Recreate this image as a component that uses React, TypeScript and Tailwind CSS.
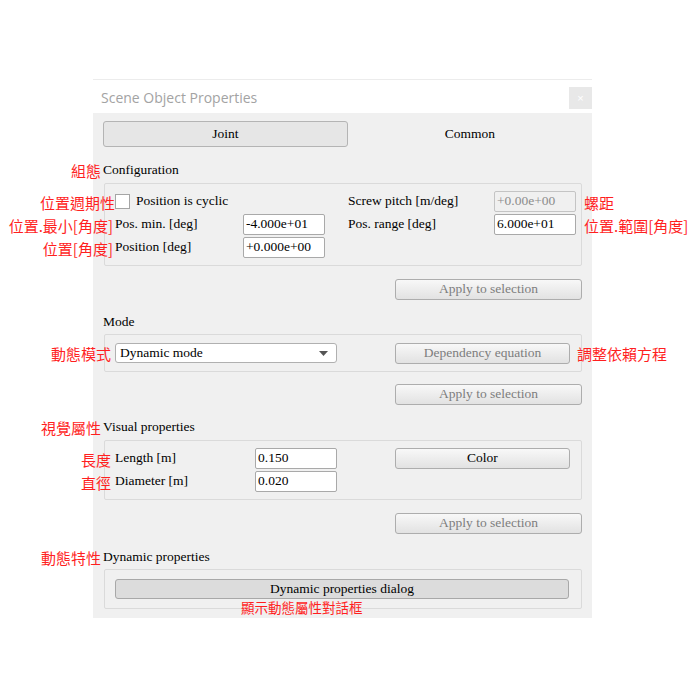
import React from "react";

const RED = "text-[#ff1f1f] font-[family-name:'Noto_Sans_CJK_TC','Noto_Sans_CJK_SC',sans-serif]";

function AnnL({ text, gap = "mr-[2px]" }: { text: string; gap?: string }) {
  return (
    <span
      className={`absolute right-full top-1/2 -translate-y-1/2 whitespace-nowrap text-[15px] leading-none ${gap} ${RED}`}
    >
      {text}
    </span>
  );
}

function AnnR({ text, gap = "ml-[9px]" }: { text: string; gap?: string }) {
  return (
    <span
      className={`absolute left-full top-1/2 -translate-y-1/2 whitespace-nowrap text-[15px] leading-none ${gap} ${RED}`}
    >
      {text}
    </span>
  );
}

function Input({ value, disabled = false, ann }: { value: string; disabled?: boolean; ann?: string }) {
  return (
    <div
      className={`relative h-[21px] w-[82px] rounded-[2px] border flex items-center pl-[2px] text-[13.5px] ${
        disabled ? "bg-[#f0f0f0] border-[#c4c4c4] text-[#8c8c8c]" : "bg-white border-[#a9a9a9] text-black"
      }`}
    >
      {value}
      {ann && <AnnR text={ann} />}
    </div>
  );
}

function Btn({ children, className = "", disabled = false }: { children: React.ReactNode; className?: string; disabled?: boolean }) {
  return (
    <div
      className={`h-[21px] rounded-[3px] border border-[#adadad] bg-linear-to-b from-[#f8f8f8] to-[#e2e2e2] flex items-center justify-center text-[13.5px] ${
        disabled ? "text-[#7d7d7d]" : "text-black"
      } ${className}`}
    >
      {children}
    </div>
  );
}

function Label({ text, ann }: { text: string; ann: string }) {
  return (
    <div className="h-[16px] flex items-center">
      <span className="relative leading-none">
        {text}
        <AnnL text={ann} />
      </span>
    </div>
  );
}

export default function App() {
  return (
    <div className="w-[700px] h-[700px] bg-white overflow-hidden font-[family-name:'Liberation_Serif',serif] text-[13.5px] text-black">
      <div className="ml-[93px] mt-[79px] w-[499px] border-t border-[#ececec]">
        {/* Title bar */}
        <div className="h-[33px] bg-white flex items-start justify-between">
          <div className="pl-[8px] pt-[7px] text-[14px] text-[#a3a3a3] font-[family-name:'Open_Sans',sans-serif]">
            Scene Object Properties
          </div>
          <div className="mt-[7px] w-[23px] h-[22px] bg-[#e8e8e8] flex items-center justify-center text-[11px] text-white font-[family-name:'Liberation_Sans',sans-serif]">
            ×
          </div>
        </div>

        {/* Body */}
        <div className="bg-[#f0f0f0] px-[10px] pt-[8px] pb-[9px] flex flex-col">
          {/* Tabs */}
          <div className="flex h-[26px]">
            <div className="w-[245px] rounded-[3px] border border-[#b4b4b4] bg-[#e6e6e6] flex items-center justify-center">
              Joint
            </div>
            <div className="flex-1 pl-[10px] flex items-center justify-center">Common</div>
          </div>

          {/* Configuration */}
          <div className="mt-[15px]">
            <Label text="Configuration" ann="組態" />
          </div>
          <div className="mt-[5px] ml-[1px] h-[83px] border border-[#dadada] rounded-[2px] pl-[10px] pt-[7px]">
            <div className="grid grid-cols-[128px_82px_23px_146px_82px] grid-rows-[21px_21px_21px] gap-y-[2px]">
              <div className="flex items-center">
                <div className="relative w-[15px] h-[15px] bg-white border border-[#a5a5a5]">
                  <AnnL text="位置週期性" gap="mr-[1px]" />
                </div>
                <span className="ml-[6px]">Position is cyclic</span>
              </div>
              <div />
              <div />
              <div className="flex items-center">Screw pitch [m/deg]</div>
              <Input value="+0.00e+00" disabled ann="螺距" />

              <div className="flex items-center">
                <span className="relative">
                  Pos. min. [deg]
                  <AnnL text="位置.最小[角度]" />
                </span>
              </div>
              <Input value="-4.000e+01" />
              <div />
              <div className="flex items-center">Pos. range [deg]</div>
              <Input value="6.000e+01" ann="位置.範圍[角度]" />

              <div className="flex items-center">
                <span className="relative">
                  Position [deg]
                  <AnnL text="位置[角度]" />
                </span>
              </div>
              <Input value="+0.000e+00" />
            </div>
          </div>

          <div className="mt-[13px] flex justify-end">
            <Btn disabled className="w-[187px]">Apply to selection</Btn>
          </div>

          {/* Mode */}
          <div className="mt-[14px] h-[16px] flex items-center">Mode</div>
          <div className="mt-[4px] ml-[1px] h-[38px] border border-[#dadada] rounded-[2px] pl-[10px] flex items-center">
            <div className="relative w-[222px] h-[20px] bg-white border border-[#b0b0b0] rounded-[3px] flex items-center pl-[4px] justify-between pr-[8px]">
              <AnnL text="動態模式" gap="mr-[5px]" />
              <span>Dynamic mode</span>
              <svg width="9" height="5" viewBox="0 0 9 5">
                <path d="M0 0 L9 0 L4.5 5 Z" fill="#555" />
              </svg>
            </div>
            <div className="ml-[58px] relative">
              <Btn disabled className="w-[175px]">Dependency equation</Btn>
              <AnnR text="調整依賴方程" gap="ml-[7px]" />
            </div>
          </div>

          <div className="mt-[12px] flex justify-end">
            <Btn disabled className="w-[187px]">Apply to selection</Btn>
          </div>

          {/* Visual properties */}
          <div className="mt-[14px]">
            <Label text="Visual properties" ann="視覺屬性" />
          </div>
          <div className="mt-[5px] ml-[1px] h-[60px] border border-[#dadada] rounded-[2px] pl-[10px] pt-[7px] flex">
            <div className="grid grid-cols-[140px_82px] grid-rows-[21px_21px] gap-y-[2px]">
              <div className="flex items-center">
                <span className="relative">
                  Length [m]
                  <AnnL text="長度" gap="mr-[4px]" />
                </span>
              </div>
              <Input value="0.150" />
              <div className="flex items-center">
                <span className="relative">
                  Diameter [m]
                  <AnnL text="直徑" gap="mr-[4px]" />
                </span>
              </div>
              <Input value="0.020" />
            </div>
            <div className="ml-[58px]">
              <Btn className="w-[175px]">Color</Btn>
            </div>
          </div>

          <div className="mt-[13px] flex justify-end">
            <Btn disabled className="w-[187px]">Apply to selection</Btn>
          </div>

          {/* Dynamic properties */}
          <div className="mt-[15px]">
            <Label text="Dynamic properties" ann="動態特性" />
          </div>
          <div className="mt-[4px] ml-[1px] h-[40px] border border-[#dadada] rounded-[2px] pl-[10px] pr-[12px] flex items-center">
            <div className="relative flex-1 h-[20px] rounded-[3px] border border-[#a8a8a8] bg-[#dcdcdc] flex items-center justify-center">
              Dynamic properties dialog
              <span
                className={`absolute left-[125px] top-[21px] whitespace-nowrap text-[13.5px] leading-none ${RED}`}
              >
                顯示動態屬性對話框
              </span>
            </div>
          </div>
        </div>
      </div>
    </div>
  );
}
